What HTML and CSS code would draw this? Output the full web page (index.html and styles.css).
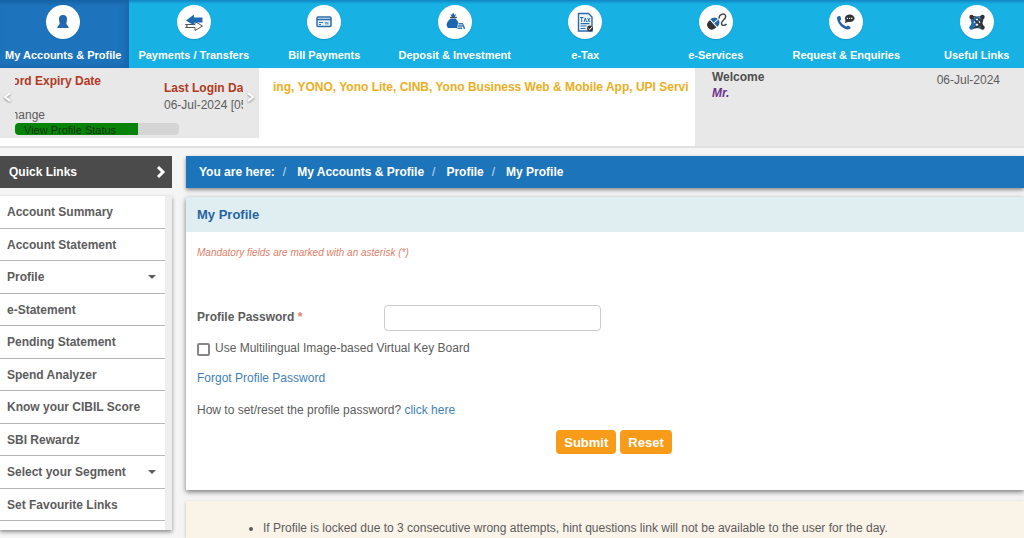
FILE: index.html
```html
<!DOCTYPE html>
<html lang="en">
<head>
<meta charset="utf-8">
<title>My Profile</title>
<link rel="stylesheet" href="styles.css">
</head>
<body>
<header class="top">
  <nav class="nav">
    <a class="nav-item active" href="#"><span class="disc"><svg viewBox="0 0 34 34"><path d="M17 10c-3 0-4.300 2-4 4.500.1 2 .5 3 .7 4-.2 1.500-2.200 2-2.500 4.500h11.600c-.3-2.500-2.300-3-2.500-4.500.2-1 .6-2 .7-4 .3-2.500-1-4.500-4-4.500z" fill="#2468b4"/></svg></span>My Accounts &amp; Profile</a>
    <a class="nav-item" href="#"><span class="disc"><svg viewBox="0 0 34 34"><path d="M8.500 19.500h9.500v-3l7.500 4.500-7.500 4.500v-3H8.500l2-1.500z" fill="#fff" stroke="#555" stroke-width="1"/><path d="M9 15.500l8-6v3h8.500v5H17v3z" fill="#1f69b3"/></svg></span>Payments / Transfers</a>
    <a class="nav-item" href="#"><span class="disc"><svg viewBox="0 0 34 34"><rect x="10" y="12" width="14" height="9.500" rx="1" fill="#e3f0fa" stroke="#2b6da8" stroke-width="1.500"/><path d="M10 14.500h14" stroke="#2b6da8" stroke-width="1.600"/><path d="M12 17.500h4M12 19.500h2" stroke="#2b6da8"/><path d="M17.500 17h4v2.500h-3z" fill="#79a7d0"/></svg></span>Bill Payments</a>
    <a class="nav-item" href="#"><span class="disc"><svg viewBox="0 0 34 34"><path d="M12.500 9l1.500 1L15 7.500l1.500 2.500 1.500-1-1 3h-3.500z" fill="#1d65ae"/><path d="M12 12.500h7" stroke="#555" stroke-width="1.200"/><path d="M13 13.500h4.500c3 3 4 5.500 3 9.500H10c-3-3-.5-7.500 3-9.500z" fill="#1d65ae"/><path d="M20 18h5v6h-6z" fill="#fff"/><path d="M20.500 18.800h4.500M20 21h4.500M19.500 23.200h4.500M25 19.500l1.500 4.500" stroke="#3c76b1" stroke-width="1.500"/></svg></span>Deposit &amp; Investment</a>
    <a class="nav-item" href="#"><span class="disc"><svg viewBox="0 0 34 34"><path d="M10.500 8.500h10l3.500 3.500v14H10.500z" fill="#edf5fc" stroke="#2c6aac" stroke-width="1.400"/><path d="M12 12.500h3.500M13.700 12.500v4.500M16 17l1.300-4 1.300 4M19.500 13l2.500 4M22 13l-2.500 4" fill="none" stroke="#2c6aac"/><path d="M12.500 18.700h9M12.500 21h6M12.500 23.500h5" stroke="#2c6aac" stroke-width="1.200"/><circle cx="22" cy="23.500" r="3" fill="#333"/><path d="M20.500 23.500l1.200 1.200 2.500-3" fill="none" stroke="#fff"/></svg></span>e-Tax</a>
    <a class="nav-item" href="#"><span class="disc"><svg viewBox="0 0 34 34"><g transform="rotate(48 14 18.500)"><rect x="9.500" y="12" width="9.500" height="13" rx="4.500" fill="#333"/><path d="M9.500 18v-1.500a4.700 4.500 0 019.500 0V18z" fill="#1f67af"/><path d="M14.200 12v6M9.500 18H19" stroke="#fff"/></g><path d="M20 13.500c0-4 5-6 6.500-3s-3.500 4.500-4 7.500c-.3 3 3.500 3 5 1" fill="none" stroke="#444" stroke-width="1.400"/></svg></span>e-Services</a>
    <a class="nav-item" href="#"><span class="disc"><svg viewBox="0 0 34 34"><path d="M8 12.500c.5-1.500 3-2 3.500-1l.7 3-1.200 1.200c1.500 2.800 3.500 4.600 6.500 5.800l1.500-1 2.500 1.500c.3 1.800-1.500 2.500-3 2.500C13.500 24 8 18 8 12.500z" fill="#2362a8"/><ellipse cx="20.700" cy="13.300" rx="4.800" ry="3.700" fill="#333"/><path d="M16.500 15l-.5 3 4-1.500z" fill="#333"/><path d="M17.800 13.300h1.200m1 0h1.200m1 0h1.200" stroke="#fff" stroke-width="1.200"/></svg></span>Request &amp; Enquiries</a>
    <a class="nav-item" href="#"><span class="disc"><svg viewBox="0 0 34 34"><g fill="none" stroke-width="2"><path d="M11 22.500l12-11" stroke="#1f67af"/><path d="M11 11.500l12 11" stroke="#333"/><path d="M11.500 12.500c0 4 1 6 3 8s4.500 2.500 8 2" stroke="#1f67af"/><path d="M22.500 12.500c0 4-1 6-3 8s-4.500 2.500-8 2" stroke="#333"/><path d="M12 12c3-.5 5 0 7 2s3.500 4.500 3.500 8" stroke="#333" stroke-width="1.500"/><path d="M22 12c-3-.5-5 0-7 2s-3.500 4.500-3.500 8" stroke="#1f67af" stroke-width="1.500"/></g><g fill="#333"><circle cx="11.500" cy="12" r="2.200"/><circle cx="22.500" cy="22.500" r="2.200"/><circle cx="22.500" cy="12" r="2.200"/></g><circle cx="11.500" cy="22.500" r="2.200" fill="#1f67af"/></svg></span>Useful Links</a>
  </nav>
  <section class="strip">
    <div class="carousel">
      <button class="arrow" aria-label="Previous"><svg viewBox="0 0 9 12"><path d="M7 2L2 6l5 4" fill="none" stroke="#fff" stroke-width="2"/></svg></button>
      <div class="slides">
        <div class="slide expiry">
          <div class="clip"><b>Password Expiry Date</b></div>
          <div class="clip"><span>Change</span></div>
          <div class="meter"><div class="meter-fill" style="width:75%">View Profile Status</div></div>
        </div>
        <div class="slide login"><b>Last Login Date</b><span>06-Jul-2024 [05:30]</span></div>
      </div>
      <button class="arrow" aria-label="Next"><svg viewBox="0 0 9 12"><path d="M2 2l5 4-5 4" fill="none" stroke="#fff" stroke-width="2"/></svg></button>
    </div>
    <div class="ticker">ing, YONO, Yono Lite, CINB, Yono Business Web &amp; Mobile App, UPI Servi</div>
    <div class="user">
      <div><div class="welcome">Welcome</div><div class="name">Mr.</div></div>
      <time class="date">06-Jul-2024</time>
    </div>
  </section>
</header>
<div class="page">
  <aside class="side">
    <h2 class="side-head">Quick Links <svg viewBox="0 0 10 12"><path d="M2 1l5 5-5 5" fill="none" stroke="#fff" stroke-width="3"/></svg></h2>
    <nav class="links">
      <a href="#">Account Summary</a>
      <a href="#">Account Statement</a>
      <a href="#">Profile <i class="caret"></i></a>
      <a href="#">e-Statement</a>
      <a href="#">Pending Statement</a>
      <a href="#">Spend Analyzer</a>
      <a href="#">Know your CIBIL Score</a>
      <a href="#">SBI Rewardz</a>
      <a href="#">Select your Segment <i class="caret"></i></a>
      <a href="#">Set Favourite Links</a>
    </nav>
  </aside>
  <main class="main">
    <nav class="crumbs"><span>You are here:</span><i>/</i><a href="#">My Accounts &amp; Profile</a><i>/</i><a href="#">Profile</a><i>/</i><a href="#">My Profile</a></nav>
    <form class="panel">
      <h1 class="panel-head">My Profile</h1>
      <div class="panel-body">
        <p class="mandatory">Mandatory fields are marked with an asterisk (*)</p>
        <div class="field"><label for="pw">Profile Password <span class="star">*</span></label><input id="pw" class="pw" type="password"></div>
        <label class="check"><input type="checkbox">Use Multilingual Image-based Virtual Key Board</label>
        <p class="line forgot"><a href="#">Forgot Profile Password</a></p>
        <p class="line">How to set/reset the profile password? <a href="#">click here</a></p>
        <div class="actions"><button type="submit">Submit</button><button type="reset">Reset</button></div>
      </div>
    </form>
    <ul class="notes"><li>If Profile is locked due to 3 consecutive wrong attempts, hint questions link will not be available to the user for the day.</li></ul>
  </main>
</div>
</body>
</html>
```
FILE: styles.css
```css
* { box-sizing: border-box; }
body { margin: 0; background: #f5f5f5; color: #5c5c5c; font: 12px/16px "Liberation Sans", Arial, sans-serif; }
a { color: #3f7fb5; text-decoration: none; }
p, h1, h2 { margin: 0; }
button { font-family: inherit; border: 0; }

.top { overflow: hidden; border-bottom: 2px solid #dfe1e1; background: #fff; }
.nav { display: grid; grid-template-columns: repeat(8, 1fr); margin: 0 -18px 0 -2px; background: linear-gradient(#1285c2, #17b1e4 4px); }
.nav-item { display: flex; flex-direction: column; align-items: center; gap: 8px; height: 68px; padding-top: 5px; color: #fff; font-size: 11px; font-weight: bold; white-space: nowrap; }
.nav-item.active { background: linear-gradient(#1762a5, #1d74bd 6px); box-shadow: inset -3px -2px 6px #1865a8; }
.disc { width: 34px; height: 34px; border-radius: 50%; background: #fff; flex: none; box-shadow: 0 1px 1px #14659a55; }
.disc svg { display: block; width: 34px; height: 34px; }

.strip { display: flex; align-items: flex-start; height: 78px; }
.carousel { display: flex; align-items: center; width: 259px; height: 70px; padding-bottom: 10px; background: #e8e8e8; font-size: 12px; }
.arrow { display: flex; justify-content: center; width: 15px; height: 24px; padding: 5px 2px; background: none; flex: none; }
.arrow svg { width: 9px; height: 12px; filter: drop-shadow(0 1px 1px #888); }
.slides { display: flex; width: 228px; height: 70px; margin-bottom: -10px; overflow: hidden; white-space: nowrap; }
.slide { flex: none; }
.slide b { color: #b03a22; }
.expiry { display: flex; flex-direction: column; width: 149px; padding-top: 5px; }
.clip { display: flex; justify-content: flex-end; width: 86px; height: 34px; overflow: hidden; }
.clip + .clip { width: 30px; height: 16px; }
.meter { width: 164px; height: 12px; overflow: hidden; border-radius: 4px; background: #d5d5d5; flex: none; }
.meter-fill { height: 12px; padding-left: 9px; background: #078407; color: #103510; font-size: 11px; line-height: 14px; }
.login { display: flex; flex-direction: column; padding-top: 12px; gap: 1px; }
.ticker { flex: 1; min-width: 0; padding: 11px 0 0 14px; overflow: hidden; color: #ecae22; font-size: 12px; font-weight: bold; white-space: nowrap; }
.user { display: flex; justify-content: space-between; width: 329px; height: 78px; padding: 1px 24px 0 17px; background: #e8e8e8; }
.welcome { font-weight: bold; color: #4e4e4e; }
.name { color: #6b348c; font-weight: bold; font-style: italic; }
.date { padding-top: 3px; color: #5c5c5c; }

.page { display: flex; align-items: flex-start; gap: 14px; padding-top: 8px; }
.side { width: 172px; flex: none; }
.side-head { display: flex; align-items: center; justify-content: space-between; height: 32px; margin-bottom: 8px; padding: 0 6px 0 9px; background: #4b4b4b; color: #fff; font-size: 12px; }
.side-head svg { width: 10px; height: 12px; }
.links { padding: 0 7px 9px 0; background: linear-gradient(to left, #eee 7px, #fff 7px); box-shadow: 0 2px 4px #8a8a8a; }
.links a { display: flex; align-items: center; justify-content: space-between; height: 33px; padding: 0 9px 0 7px; background: #fff; border-bottom: 1px solid #b5b5b5; color: #5c5c5c; font-weight: bold; }
.links a:nth-child(2n) { height: 32px; }
.caret { border: 4px solid transparent; border-top-color: #5c5c5c; border-bottom: 0; }

.main { flex: 1; min-width: 0; }
.crumbs { display: flex; align-items: center; height: 32px; margin-bottom: 9px; padding-left: 13px; background: #1c75bb; color: #fff; font-weight: bold; box-shadow: 0 2px 4px #8a8a8a; }
.crumbs a { color: #fff; }
.crumbs i { padding: 0 11px 0 8px; color: #c5dcf0; font-style: normal; font-weight: normal; }
.panel { background: #fff; box-shadow: 0 2px 5px #777; }
.panel-head { height: 35px; padding: 10px 11px 0; background: #e0eef2; color: #25659f; font-size: 13px; line-height: 16px; }
.panel-body { padding: 13px 11px 36px; }
.mandatory { color: #dd7e68; font-size: 10px; font-style: italic; line-height: 16px; }
.field { display: flex; align-items: flex-start; margin-top: 44px; }
.field label { width: 187px; padding-top: 4px; font-weight: bold; }
.star { color: #e08368; }
.pw { width: 217px; height: 26px; padding: 4px 8px; border: 1px solid #ccc; border-radius: 4px; background: #fff; }
.check { display: flex; align-items: center; gap: 5px; width: max-content; margin-top: 9px; }
.check input { width: 13px; height: 13px; margin: 2px 0 0; appearance: none; border: 2px solid #858585; border-radius: 2px; background: #fff; }
.line { margin-top: 16px; }
.line.forgot { margin-top: 14px; }
.actions { display: flex; justify-content: center; gap: 4px; margin: 12px 0 0 18px; }
.actions button { height: 24px; padding: 0 8px; border-radius: 4px; background: #f79b18; color: #fff; font-size: 13px; font-weight: bold; }
.notes { margin: 11px 0 0; padding: 19px 20px 2px 77px; background: #faf3e8; box-shadow: 0 1px 3px #bbb; }
```
